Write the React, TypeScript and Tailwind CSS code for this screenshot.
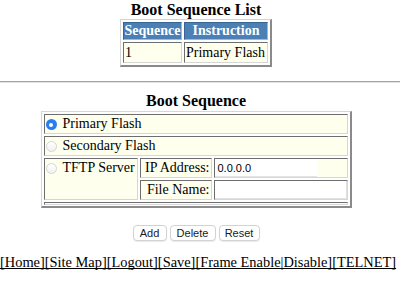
import React from "react";

const cell =
  "border border-t-[#6e6e6e] border-l-[#6e6e6e] border-r-[#d6d6d6] border-b-[#d6d6d6] bg-[#ffffee]";

function Radio({ checked }: { checked?: boolean }) {
  if (checked) {
    return (
      <span className="mt-[4px] w-[11px] h-[11px] rounded-full bg-[#2b7cf2] flex items-center justify-center shrink-0">
        <span className="block w-[4px] h-[4px] rounded-full bg-white" />
      </span>
    );
  }
  return (
    <span className="mt-[4px] block w-[11px] h-[11px] rounded-full border border-[#d4d4d4] bg-[linear-gradient(#ffffff,#f1f1f1)] shrink-0" />
  );
}

export default function App() {
  return (
    <div className="w-[400px] h-[304px] bg-white text-black font-['Liberation_Serif',serif] overflow-hidden">
      <div className="w-[392px] flex flex-col items-center">
        <div className="pt-[1px] text-[16px] leading-[18px] font-bold">Boot Sequence List</div>
        <div className="grid grid-cols-[59px_84px] gap-[2px] p-[2px] border-t border-l border-t-[#d4d4d4] border-l-[#d4d4d4] border-r-2 border-b-2 border-r-[#8a8a8a] border-b-[#8a8a8a] text-[14px]">
          <div className="h-[18px] bg-[#4a80b6] text-white font-bold text-center border border-t-[#3a6590] border-l-[#3a6590] border-r-[#9fb9d6] border-b-[#9fb9d6] leading-[16px]">
            Sequence
          </div>
          <div className="h-[18px] bg-[#4a80b6] text-white font-bold text-center border border-t-[#3a6590] border-l-[#3a6590] border-r-[#9fb9d6] border-b-[#9fb9d6] leading-[16px]">
            Instruction
          </div>
          <div className={`h-[21px] ${cell} px-[1px] leading-[19px]`}>1</div>
          <div className={`h-[21px] ${cell} px-[1px] leading-[19px]`}>Primary Flash</div>
        </div>
      </div>

      <div className="mt-[14px] w-[400px] border-t border-b border-t-[#a4a4a4] border-b-[#e2e2e2]" />

      <div className="w-[392px] flex flex-col items-center">
        <div className="mt-[9px] text-[16px] leading-[18px] font-bold">Boot Sequence</div>
        <div className="mt-[1px] w-[311px] grid grid-cols-[94px_72px_1fr] gap-[2px] p-[2px] pb-[1px] border-t border-l border-t-[#d6d6d6] border-l-[#d6d6d6] border-r-2 border-b-2 border-r-[#8a8a8a] border-b-[#8a8a8a] text-[14px] leading-[18px]">
          <div className={`col-span-3 h-[20px] ${cell} pl-[1px] flex items-start`}>
            <Radio checked />
            <span className="ml-[6px]">Primary Flash</span>
          </div>
          <div className={`col-span-3 h-[20px] ${cell} pl-[1px] flex items-start`}>
            <Radio />
            <span className="ml-[6px]">Secondary Flash</span>
          </div>
          <div className={`row-span-2 ${cell} pl-[1px] flex items-start`}>
            <Radio />
            <span className="ml-[6px] whitespace-nowrap">TFTP Server</span>
          </div>
          <div className={`h-[20px] ${cell} pr-[1px] text-right whitespace-nowrap`}>IP Address:</div>
          <div className={`h-[20px] ${cell} flex`}>
            <div className="w-[102px] h-[18px] bg-white border-b border-[#e4e4e4] font-['Liberation_Sans',sans-serif] text-[11px] leading-[18px] pl-[3px]">
              0.0.0.0
            </div>
          </div>
          <div className={`h-[20px] ${cell} pr-[1px] text-right whitespace-nowrap`}>File Name:</div>
          <div className={`h-[20px] ${cell} flex`}>
            <div className="flex-1 h-[18px] bg-white border-b border-r border-[#e0e0e0]" />
          </div>
          <div className={`col-span-3 h-[3px] ${cell}`} />
        </div>

        <div className="mt-[17px] flex gap-[3px] font-['Liberation_Sans',sans-serif] text-[11px]">
          <button className="w-[34px] h-[16px] rounded-[4px] bg-white border border-[#d2d2d2] shadow-[0_1px_1px_rgba(0,0,0,0.08)] leading-[14px] text-[#1a1a1a]">
            Add
          </button>
          <button className="w-[46px] h-[16px] rounded-[4px] bg-white border border-[#d2d2d2] shadow-[0_1px_1px_rgba(0,0,0,0.08)] leading-[14px] text-[#1a1a1a]">
            Delete
          </button>
          <button className="w-[41px] h-[16px] rounded-[4px] bg-white border border-[#d2d2d2] shadow-[0_1px_1px_rgba(0,0,0,0.08)] leading-[14px] text-[#1a1a1a]">
            Reset
          </button>
        </div>
      </div>

      <div className="mt-[13px] whitespace-nowrap text-[14.4px] leading-[16px] underline [text-decoration-skip-ink:none] underline-offset-[1px]">
        [Home][Site Map][Logout][Save][Frame Enable|Disable][TELNET]
      </div>
    </div>
  );
}
